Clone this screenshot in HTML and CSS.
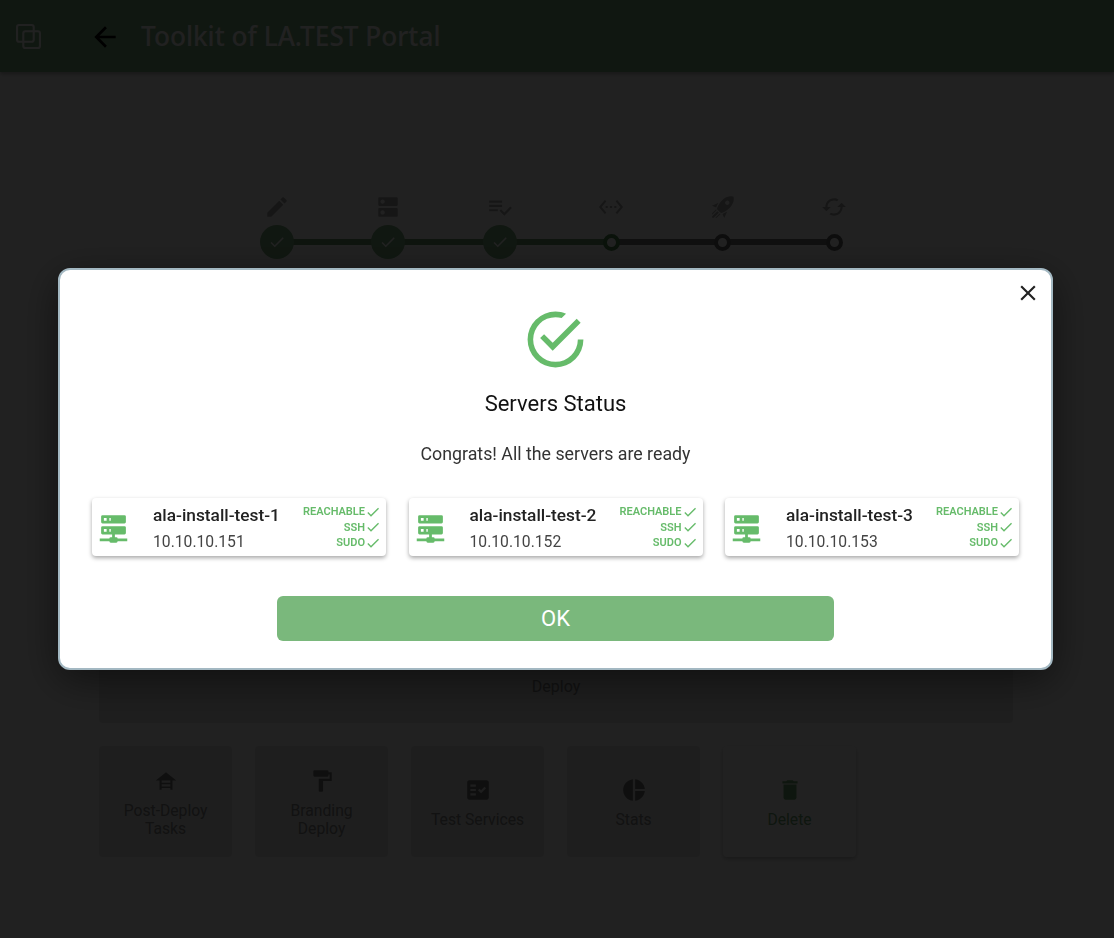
FILE: index.html
```html
<!DOCTYPE html>
<html lang="en">
<head>
  <meta charset="UTF-8" />
  <title>Toolkit of LA.TEST Portal</title>
  <link rel="stylesheet" href="styles.css">
</head>
<body>

  <header class="app-bar">
    <svg class="logo" viewBox="0 0 24 24"><rect x="1" y="1" width="16" height="16" rx="2"/><rect x="7" y="7" width="16" height="16" rx="2"/></svg>
    <svg class="back" viewBox="0 0 24 24"><path d="M20 11H7.83l5.59-5.59L12 4l-8 8 8 8 1.41-1.41L7.83 13H20v-2z"/></svg>
    <h1>Toolkit of LA.TEST Portal</h1>
  </header>

  <main class="page">
    <div class="stepper">
      <svg class="step-icon" viewBox="0 0 24 24"><path d="M3 17.25V21h3.75L17.81 9.94l-3.75-3.75L3 17.25zM20.71 7.04c.39-.39.39-1.02 0-1.41l-2.34-2.34c-.39-.39-1.02-.39-1.41 0l-1.83 1.83 3.75 3.75 1.83-1.83z"/></svg>
      <svg class="step-icon" viewBox="0 0 24 24"><path d="M20 13H4c-.55 0-1 .45-1 1v6c0 .55.45 1 1 1h16c.55 0 1-.45 1-1v-6c0-.55-.45-1-1-1zM7 19c-1.1 0-2-.9-2-2s.9-2 2-2 2 .9 2 2-.9 2-2 2zM20 3H4c-.55 0-1 .45-1 1v6c0 .55.45 1 1 1h16c.55 0 1-.45 1-1V4c0-.55-.45-1-1-1zM7 9c-1.1 0-2-.9-2-2s.9-2 2-2 2 .9 2 2-.9 2-2 2z"/></svg>
      <svg class="step-icon" viewBox="0 0 24 24"><path d="M14 10H2v2h12v-2zm0-4H2v2h12V6zM2 16h8v-2H2v2zm19.5-4.5L23 13l-6.99 7-4.51-4.5L13 14l3.01 3 5.49-5.5z"/></svg>
      <svg class="step-icon" viewBox="0 0 24 24"><path d="M7.77 6.76L6.23 5.48.82 12l5.41 6.52 1.54-1.28L3.42 12l4.35-5.24zM7 13h2v-2H7v2zm10-2h-2v2h2v-2zm-6 2h2v-2h-2v2zm6.77-7.52l-1.54 1.28L20.58 12l-4.35 5.24 1.54 1.28L23.18 12l-5.41-6.52z"/></svg>
      <svg class="step-icon" viewBox="0 0 24 24"><path d="M13.13 22.19L11.5 18.36C13.07 17.78 14.54 17 15.9 16.09L13.13 22.19M5.64 12.5L1.81 10.87L7.91 8.1C7 9.46 6.22 10.93 5.64 12.5M21.61 2.39C21.61 2.39 16.66 .269 11 5.93C8.81 8.12 7.5 10.53 6.65 12.64C6.37 13.39 6.56 14.21 7.11 14.77L9.24 16.89C9.79 17.45 10.61 17.64 11.36 17.36C13.5 16.54 15.88 15.19 18.07 13C23.73 7.34 21.61 2.39 21.61 2.39M14.54 9.46C13.76 8.68 13.76 7.41 14.54 6.63S16.59 5.85 17.37 6.63C18.14 7.41 18.15 8.68 17.37 9.46C16.59 10.24 15.32 10.24 14.54 9.46M6.24 22L9.88 18.36C9.54 18.27 9.21 18.12 8.91 17.91L4.83 22H6.24M2 22H3.41L8.18 17.24L6.76 15.83L2 20.59V22M2 19.17L6.09 15.09C5.88 14.79 5.73 14.47 5.64 14.12L2 17.76V19.17Z"/></svg>
      <svg class="step-icon" viewBox="0 0 24 24"><path d="M19 8l-4 4h3c0 3.31-2.69 6-6 6-1.01 0-1.97-.25-2.8-.7l-1.46 1.46C8.97 19.54 10.43 20 12 20c4.42 0 8-3.58 8-8h3l-4-4zM6 12c0-3.31 2.69-6 6-6 1.01 0 1.97.25 2.8.7l1.46-1.46C15.03 4.46 13.57 4 12 4c-4.42 0-8 3.58-8 8H1l4 4 4-4H6z"/></svg>

      <div class="rail">
        <span class="rail-done"></span>
        <span class="rail-todo"></span>
      </div>
      <span class="dot done"><svg viewBox="0 0 24 24"><path d="M9 16.17L4.83 12l-1.42 1.41L9 19 21 7l-1.41-1.41z"/></svg></span>
      <span class="dot done"><svg viewBox="0 0 24 24"><path d="M9 16.17L4.83 12l-1.42 1.41L9 19 21 7l-1.41-1.41z"/></svg></span>
      <span class="dot done"><svg viewBox="0 0 24 24"><path d="M9 16.17L4.83 12l-1.42 1.41L9 19 21 7l-1.41-1.41z"/></svg></span>
      <span class="dot current"></span>
      <span class="dot"></span>
      <span class="dot"></span>
    </div>

    <div class="deploy-card">Deploy</div>

    <div class="tool-row">
      <div class="tool">
        <svg viewBox="0 0 24 24"><path fill-rule="evenodd" d="M12 4 2.5 11.5H6V20h2v-1.5h8V20h2v-8.500h3.500zM8 11.500h8v2H8zM8 15h8v2H8z"/></svg>
        <span>Post-Deploy<br>Tasks</span>
      </div>
      <div class="tool">
        <svg viewBox="0 0 24 24"><path d="M18,4V3A1,1 0 0,0 17,2H5A1,1 0 0,0 4,3V7A1,1 0 0,0 5,8H17A1,1 0 0,0 18,7V6H19V10H9V21A1,1 0 0,0 10,22H12A1,1 0 0,0 13,21V12H21V4H18Z"/></svg>
        <span>Branding<br>Deploy</span>
      </div>
      <div class="tool">
        <svg viewBox="0 0 24 24"><path d="M20 3H4c-1.100 0-2 .9-2 2v14c0 1.100.9 2 2 2h16c1.100 0 2-.9 2-2V5c0-1.100-.9-2-2-2zM10 17H5v-2h5v2zm0-4H5v-2h5v2zm0-4H5V7h5v2zm4.820 6L12 12.160l1.410-1.410 1.410 1.420L17.990 9l1.420 1.420L14.820 15z"/></svg>
        <span>Test Services</span>
      </div>
      <div class="tool">
        <svg viewBox="0 0 24 24"><path d="M11 2v20c-5.070-.5-9-4.790-9-10s3.930-9.500 9-10zm2.030 0v8.990H22c-.47-4.740-4.240-8.520-8.970-8.990zm0 11.010V22c4.740-.47 8.500-4.250 8.970-8.990h-8.970z"/></svg>
        <span>Stats</span>
      </div>
      <div class="tool active">
        <svg viewBox="0 0 24 24"><path d="M6 19c0 1.100.9 2 2 2h8c1.100 0 2-.9 2-2V7H6v12zM19 4h-3.500l-1-1h-5l-1 1H5v2h14V4z"/></svg>
        <span>Delete</span>
      </div>
    </div>
  </main>

  <div class="scrim">
    <section class="dialog">
      <svg class="close" viewBox="0 0 24 24"><path d="M19 6.410 17.590 5 12 10.590 6.410 5 5 6.410 10.590 12 5 17.590 6.410 19 12 13.410 17.590 19 19 17.590 13.410 12z"/></svg>
      <svg class="ok-icon" viewBox="0 0 24 24"><path d="M20,12A8,8 0 0,1 12,20A8,8 0 0,1 4,12A8,8 0 0,1 12,4C12.760,4 13.500,4.110 14.200,4.310L15.770,2.740C14.610,2.260 13.340,2 12,2A10,10 0 0,0 2,12A10,10 0 0,0 12,22A10,10 0 0,0 22,12M7.910,10.080L6.500,11.500L11,16L21,6L19.590,4.580L11,13.170L7.910,10.080Z"/></svg>
      <h2>Servers Status</h2>
      <p>Congrats! All the servers are ready</p>

      <div class="servers">
        <div class="server">
          <svg class="server-icon" viewBox="0 0 24 24"><path d="M13,19H14A1,1 0 0,1 15,20H22V22H15A1,1 0 0,1 14,23H10A1,1 0 0,1 9,22H2V20H9A1,1 0 0,1 10,19H11V17H4A1,1 0 0,1 3,16V12A1,1 0 0,1 4,11H20A1,1 0 0,1 21,12V16A1,1 0 0,1 20,17H13V19M4,3H20A1,1 0 0,1 21,4V8A1,1 0 0,1 20,9H4A1,1 0 0,1 3,8V4A1,1 0 0,1 4,3M9,7H10V5H9V7M9,15H10V13H9V15M5,5V7H7V5H5M5,13V15H7V13H5Z"/></svg>
          <div class="server-info">
            <strong>ala-install-test-1</strong>
            <span>10.10.10.151</span>
          </div>
          <ul class="checks">
            <li>REACHABLE<svg viewBox="0 0 24 24"><path d="M21,7L9,19L3.500,13.500L4.910,12.090L9,16.170L19.590,5.590L21,7Z"/></svg></li>
            <li>SSH<svg viewBox="0 0 24 24"><path d="M21,7L9,19L3.500,13.500L4.910,12.090L9,16.170L19.590,5.590L21,7Z"/></svg></li>
            <li>SUDO<svg viewBox="0 0 24 24"><path d="M21,7L9,19L3.500,13.500L4.910,12.090L9,16.170L19.590,5.590L21,7Z"/></svg></li>
          </ul>
        </div>
        <div class="server">
          <svg class="server-icon" viewBox="0 0 24 24"><path d="M13,19H14A1,1 0 0,1 15,20H22V22H15A1,1 0 0,1 14,23H10A1,1 0 0,1 9,22H2V20H9A1,1 0 0,1 10,19H11V17H4A1,1 0 0,1 3,16V12A1,1 0 0,1 4,11H20A1,1 0 0,1 21,12V16A1,1 0 0,1 20,17H13V19M4,3H20A1,1 0 0,1 21,4V8A1,1 0 0,1 20,9H4A1,1 0 0,1 3,8V4A1,1 0 0,1 4,3M9,7H10V5H9V7M9,15H10V13H9V15M5,5V7H7V5H5M5,13V15H7V13H5Z"/></svg>
          <div class="server-info">
            <strong>ala-install-test-2</strong>
            <span>10.10.10.152</span>
          </div>
          <ul class="checks">
            <li>REACHABLE<svg viewBox="0 0 24 24"><path d="M21,7L9,19L3.500,13.500L4.910,12.090L9,16.170L19.590,5.590L21,7Z"/></svg></li>
            <li>SSH<svg viewBox="0 0 24 24"><path d="M21,7L9,19L3.500,13.500L4.910,12.090L9,16.170L19.590,5.590L21,7Z"/></svg></li>
            <li>SUDO<svg viewBox="0 0 24 24"><path d="M21,7L9,19L3.500,13.500L4.910,12.090L9,16.170L19.590,5.590L21,7Z"/></svg></li>
          </ul>
        </div>
        <div class="server">
          <svg class="server-icon" viewBox="0 0 24 24"><path d="M13,19H14A1,1 0 0,1 15,20H22V22H15A1,1 0 0,1 14,23H10A1,1 0 0,1 9,22H2V20H9A1,1 0 0,1 10,19H11V17H4A1,1 0 0,1 3,16V12A1,1 0 0,1 4,11H20A1,1 0 0,1 21,12V16A1,1 0 0,1 20,17H13V19M4,3H20A1,1 0 0,1 21,4V8A1,1 0 0,1 20,9H4A1,1 0 0,1 3,8V4A1,1 0 0,1 4,3M9,7H10V5H9V7M9,15H10V13H9V15M5,5V7H7V5H5M5,13V15H7V13H5Z"/></svg>
          <div class="server-info">
            <strong>ala-install-test-3</strong>
            <span>10.10.10.153</span>
          </div>
          <ul class="checks">
            <li>REACHABLE<svg viewBox="0 0 24 24"><path d="M21,7L9,19L3.500,13.500L4.910,12.090L9,16.170L19.590,5.590L21,7Z"/></svg></li>
            <li>SSH<svg viewBox="0 0 24 24"><path d="M21,7L9,19L3.500,13.500L4.910,12.090L9,16.170L19.590,5.590L21,7Z"/></svg></li>
            <li>SUDO<svg viewBox="0 0 24 24"><path d="M21,7L9,19L3.500,13.500L4.910,12.090L9,16.170L19.590,5.590L21,7Z"/></svg></li>
          </ul>
        </div>
      </div>

      <button class="ok-button" type="button">OK</button>
    </section>
  </div>

</body>
</html>
```

FILE: styles.css
```css
* {
  box-sizing: border-box;
}

html,
body {
  height: 100%;
}

body {
  margin: 0;
  font-family: 'Roboto', sans-serif;
  background-color: #fff;
  overflow: hidden;
}

.app-bar {
  height: 72px;
  padding-left: 16px;
  display: flex;
  align-items: center;
  background-color: #7fb082;
  box-shadow: 0 2px 4px rgba(0, 0, 0, 0.3);
}

.logo {
  width: 25px;
  height: 25px;
  fill: none;
  stroke: #fff;
  stroke-width: 2;
}

.back {
  width: 32px;
  height: 32px;
  margin-left: 48px;
  margin-top: 2px;
  fill: #000;
}

.app-bar h1 {
  margin: 0 0 0 20px;
  color: #fff;
  font-family: 'Noto Sans', sans-serif;
  font-size: 26.2px;
  font-weight: 500;
}

.page {
  width: 914px;
  margin-left: 99px;
  padding-top: 123px;
}

.stepper {
  position: relative;
  width: 669px;
  margin-left: 122px;
  display: grid;
  grid-template-columns: repeat(6, 1fr);
  grid-template-rows: 24px 34px;
  row-gap: 6px;
  justify-items: center;
  align-items: center;
}

.step-icon {
  width: 26px;
  height: 26px;
  fill: #aaa;
}

.rail {
  position: absolute;
  left: 55.7px;
  right: 55.7px;
  top: 44px;
  height: 6px;
  display: flex;
}

.rail-done {
  width: 60%;
  background-color: #6a9a6d;
}

.rail-todo {
  width: 40%;
  background-color: #777;
}

.dot {
  position: relative;
  width: 17px;
  height: 17px;
  border-radius: 50%;
  border: 4px solid #666;
  background-color: #fff;
}

.dot.current {
  border-color: #4f8a52;
}

.dot.done {
  width: 34px;
  height: 34px;
  border: none;
  background-color: #7fb082;
  display: flex;
  align-items: center;
  justify-content: center;
}

.dot.done svg {
  width: 18px;
  height: 18px;
  fill: #fff;
}

.deploy-card {
  height: 144px;
  margin-top: 320px;
  padding-bottom: 27px;
  display: flex;
  align-items: flex-end;
  justify-content: center;
  background-color: #e6e6e6;
  border-radius: 4px;
  color: #888;
  font-size: 16px;
}

.tool-row {
  margin-top: 23px;
  display: flex;
  gap: 22.8px;
}

.tool {
  width: 133.2px;
  height: 111px;
  padding-top: 3px;
  display: flex;
  flex-direction: column;
  align-items: center;
  justify-content: center;
  gap: 8px;
  background-color: #e6e6e6;
  border-radius: 4px;
  color: #888;
  font-size: 15.7px;
  line-height: 18px;
  text-align: center;
}

.tool svg {
  width: 26px;
  height: 26px;
  fill: #777;
}

.tool.active {
  background-color: #fff;
  box-shadow: 0 2px 4px rgba(0, 0, 0, 0.25);
  color: #6fa872;
}

.tool.active svg {
  fill: #6fa872;
}

.scrim {
  position: fixed;
  top: 0;
  left: 0;
  right: 3px;
  bottom: 0;
  display: flex;
  align-items: center;
  justify-content: center;
}

.scrim::before {
  content: '';
  position: fixed;
  top: 0;
  left: 0;
  right: 0;
  bottom: 0;
  background-color: rgba(0, 0, 0, 0.87);
}

.dialog {
  position: relative;
  width: 995px;
  height: 402px;
  padding: 36px 32px 0;
  display: flex;
  flex-direction: column;
  align-items: center;
  background-color: #fff;
  border: 2px solid #a3b8c2;
  border-radius: 12px;
  box-shadow: 0 10px 40px rgba(0, 0, 0, 0.5);
}

.close {
  position: absolute;
  top: 10px;
  right: 10px;
  width: 26px;
  height: 26px;
  fill: #222;
}

.ok-icon {
  width: 67px;
  height: 67px;
  fill: #66bb6a;
  flex-shrink: 0;
}

.dialog h2 {
  margin: 18px 0 0;
  font-size: 22px;
  font-weight: 400;
  line-height: 26px;
  color: #111;
}

.dialog p {
  margin: 26px 0 0;
  font-size: 17.8px;
  line-height: 22px;
  color: #333;
}

.servers {
  width: 100%;
  margin-top: 33px;
  display: flex;
  gap: 22.5px;
}

.server {
  flex: 1;
  height: 58px;
  padding: 0 5px 0 5px;
  display: flex;
  align-items: center;
  background-color: #fff;
  border-radius: 4px;
  box-shadow: 0 2px 4px rgba(0, 0, 0, 0.35);
}

.server-icon {
  width: 33px;
  height: 33px;
  fill: #66bb6a;
  flex-shrink: 0;
}

.server-info {
  margin-left: 23px;
  padding-top: 2px;
  flex: 1;
  display: flex;
  flex-direction: column;
  gap: 6px;
}

.server-info strong {
  font-size: 17.3px;
  font-weight: 500;
  line-height: 21px;
  color: #222;
}

.server-info span {
  font-size: 15.7px;
  line-height: 20px;
  color: #444;
}

.checks {
  margin: 0;
  padding: 0;
  list-style: none;
  color: #66bb6a;
  font-size: 11px;
  font-weight: 600;
  text-align: right;
}

.checks li {
  height: 15.5px;
  display: flex;
  align-items: center;
  justify-content: flex-end;
}

.checks svg {
  width: 16px;
  height: 16px;
  fill: #66bb6a;
}

.ok-button {
  width: 557px;
  height: 45px;
  margin-top: 40px;
  border: none;
  border-radius: 6px;
  background-color: #7ab87c;
  color: #fff;
  font-family: 'Roboto', sans-serif;
  font-size: 22px;
  font-weight: 400;
}
```
